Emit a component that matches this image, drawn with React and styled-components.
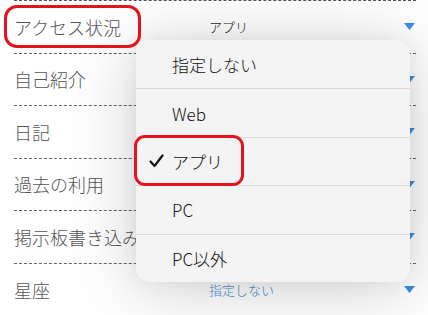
import React from "react";
import styled, { createGlobalStyle } from "styled-components";

const Global = createGlobalStyle`
  html, body { margin: 0; padding: 0; background: #ffffff; }
  body { font-family: "Noto Sans CJK JP", "Noto Sans", sans-serif; overflow: hidden; }
`;

const Page = styled.div`
  position: relative;
  width: 428px;
  height: 315px;
  overflow: hidden;
  background: #ffffff;
`;

const List = styled.div`
  margin: 0 12px 0 14px;
  border-top: 1px dashed #555;
`;

const Row = styled.div`
  box-sizing: border-box;
  height: 52.5px;
  display: grid;
  grid-template-columns: 195px 1fr 12px;
  align-items: center;
  border-bottom: ${(p) => (p.$last ? "none" : "1px dashed #666")};
`;

const Label = styled.span`
  font-size: 18px;
  font-weight: 300;
  color: #555;
  white-space: nowrap;
`;

const Value = styled.span`
  font-size: 13px;
  font-weight: 300;
  color: ${(p) => (p.$blue ? "#4a8fd6" : "#222")};
  white-space: nowrap;
`;

const Caret = styled.svg`
  width: 11px;
  height: 7px;
  display: block;
`;

const Menu = styled.div`
  position: absolute;
  left: 136px;
  top: 40px;
  width: 274px;
  background: #f4f4f4;
  border-radius: 14px;
  box-shadow: 0 6px 70px rgba(0, 0, 0, 0.2), 0 0 20px rgba(0, 0, 0, 0.05);
  overflow: hidden;
`;

const Item = styled.div`
  box-sizing: border-box;
  height: 48.4px;
  display: flex;
  align-items: center;
  padding-left: 13px;
  border-top: ${(p) => (p.$first ? "none" : "1px solid #d9d9d9")};
  font-size: 17px;
  font-weight: 300;
  color: #111;
`;

const CheckSlot = styled.span`
  width: 23px;
  display: flex;
  align-items: center;
`;

const Mark = styled.div`
  position: absolute;
  border: 3px solid #e4131c;
  border-radius: ${(p) => p.$r}px;
  box-sizing: border-box;
`;

const CaretIcon = () => (
  <Caret viewBox="0 0 11 7">
    <polygon points="0,0 11,0 5.5,7" fill="#3a8ee2" />
  </Caret>
);

const CheckIcon = () => (
  <svg width="15" height="14" viewBox="0 0 15 14">
    <polyline
      points="1.5,7.5 5.5,12 13.5,1.5"
      fill="none"
      stroke="#111"
      strokeWidth="2.2"
      strokeLinecap="round"
      strokeLinejoin="round"
    />
  </svg>
);

const rows = [
  { label: "アクセス状況", value: "アプリ" },
  { label: "自己紹介", value: "" },
  { label: "日記", value: "" },
  { label: "過去の利用", value: "" },
  { label: "掲示板書き込み", value: "" },
  { label: "星座", value: "指定しない", blue: true },
];

const options = ["指定しない", "Web", "アプリ", "PC", "PC以外"];

export default function App() {
  return (
    <Page>
      <Global />
      <List>
        {rows.map((r, i) => (
          <Row key={r.label} $last={i === rows.length - 1}>
            <Label>{r.label}</Label>
            <Value $blue={r.blue}>{r.value}</Value>
            <CaretIcon />
          </Row>
        ))}
      </List>
      <Menu>
        {options.map((o, i) => (
          <Item key={o} $first={i === 0}>
            <CheckSlot>{o === "アプリ" ? <CheckIcon /> : null}</CheckSlot>
            {o}
          </Item>
        ))}
      </Menu>
      <Mark $r={13} style={{ left: 4, top: 5, width: 137, height: 43 }} />
      <Mark $r={11} style={{ left: 134, top: 135, width: 110, height: 51 }} />
    </Page>
  );
}
